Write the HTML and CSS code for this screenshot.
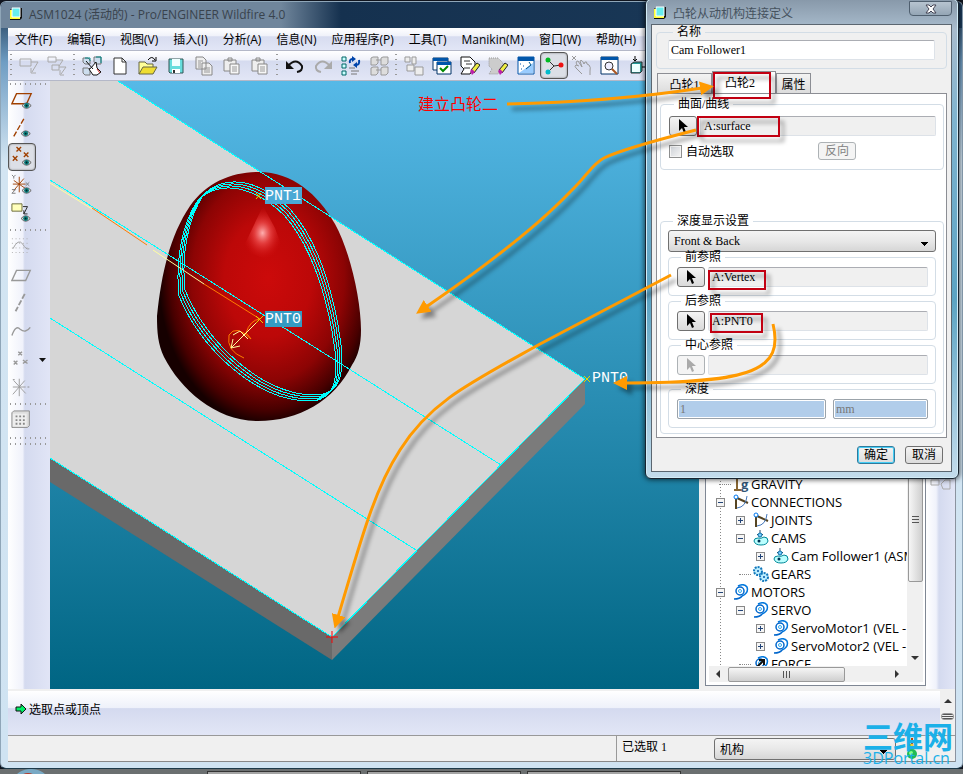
FILE: index.html
```html
<!DOCTYPE html>
<html lang="zh-CN">
<head>
  <meta charset="UTF-8">
  <meta name="viewport" content="width=device-width, initial-scale=1.0">
  <title>ASM1024 (活动的) - Pro/ENGINEER Wildfire 4.0</title>
  <link rel="stylesheet" href="styles.css">
</head>
<body>
  <!-- Shared icons -->
  <svg class="sprite" aria-hidden="true">
    <symbol id="app" viewBox="0 0 14 14"><path d="M1 3l2-2h10v10l-2 2H1z" fill="#111"/><path d="M1 3h10v9H1z" fill="#ff3"/><path d="M3 1h8v9H3z" fill="#6ee"/><path d="M3 1h8v9H3z" fill="none" stroke="#fff"/></symbol>
    <symbol id="eye" viewBox="0 0 12 8"><path d="M1 4q5-6 10 0q-5 6-10 0z" fill="#ddd" stroke="#555"/><circle cx="6" cy="4" r="2.7" fill="#087878"/><circle cx="6" cy="4" r="1" fill="#022"/></symbol>
    <symbol id="cursor" viewBox="0 0 12 16"><path d="M2 1v12l3-3 2 5 2-1-2-5h4z" fill="currentColor"/></symbol>
    <symbol id="joint" viewBox="0 0 16 16"><path d="M3 3v12M4 4l11 5" stroke="#542" stroke-width="2"/><path d="M4 14q9-1 10-12" fill="none" stroke="#47b"/><circle cx="3" cy="3" r="2" fill="#fff" stroke="#07e"/></symbol>
    <symbol id="cam" viewBox="0 0 16 16"><path d="M7 0v7M4 4l3 3 3-3" fill="none" stroke="#246"/><circle cx="7" cy="5" r="2" fill="#7cf" stroke="#17a"/><path d="M1 11q0-3 4-3q3 1 6-1q4 0 4 4q-1 4-7 4t-7-4z" fill="#bff" stroke="#089"/><circle cx="6" cy="11" r="1.500" fill="#035"/></symbol>
    <symbol id="motor" viewBox="0 0 16 16"><path d="M5 2q6-3 9 1q2 6-5 9" fill="none" stroke="#07d" stroke-width="1.500"/><circle cx="7" cy="7" r="4" fill="none" stroke="#06c" stroke-width="1.500"/><circle cx="7" cy="7" r="1.500" fill="none" stroke="#3ae"/><path d="M1 15q6 0 8-3" fill="none" stroke="#06c" stroke-width="1.500"/></symbol>
    <symbol id="clip" viewBox="0 0 20 20"><path d="M2 4h12v11H2zM6 2h4v3H6z" fill="#eee" stroke="#888"/><path d="M8 8h9v10H8z" fill="#f7f7f7" stroke="#888"/><path d="M10 11h5M10 13h5M10 15h5" stroke="#999"/></symbol>
  </svg>

  <div class="app-window">
    <header class="title-bar">
      <svg class="app-icon"><use href="#app"/></svg>
      <span class="title-text">ASM1024 (活动的) - Pro/ENGINEER Wildfire 4.0</span>
    </header>

    <div class="client">
      <nav class="menu-bar">
        <button>文件(F)</button>
        <button>编辑(E)</button>
        <button>视图(V)</button>
        <button>插入(I)</button>
        <button>分析(A)</button>
        <button>信息(N)</button>
        <button>应用程序(P)</button>
        <button>工具(T)</button>
        <button>Manikin(M)</button>
        <button>窗口(W)</button>
        <button>帮助(H)</button>
      </nav>

      <div class="toolbar">
        <i class="handle"></i>
        <button aria-label="选取"><svg viewBox="0 0 20 20"><path d="M1 3h11v7H1zM12 6h7l-6 10M12 12v5h5" fill="none" stroke="#aaa"/></svg></button>
        <button aria-label="选取链"><svg viewBox="0 0 20 20"><path d="M1 1h8v5H1zM5 9h7v5H5zM9 4h7l-4 6M12 11h7l-5 7M13 14v5h4" fill="none" stroke="#aaa"/></svg></button>
        <i class="handle"></i>
        <button aria-label="装配"><svg viewBox="0 0 20 20"><path d="M1 2h5l2 2v4H3L1 6zM12 1h7v7h-5l-2-2zM1 12h5l2 2v5H3l-2-2z" fill="#cde" stroke="#777"/><path d="M3 2h5v3M14 1h5v6" fill="none" stroke="#088"/><path d="M4 5l7 8M9 12l5-6 1 6 4 4-4 3h-4l-4-6z" fill="#fff" stroke="#111"/><path d="M15 13l3 4" stroke="#c22"/></svg></button>
        <button aria-label="新建"><svg viewBox="0 0 20 20"><path d="M4 2h8l4 4v12H4z" fill="#fff" stroke="#333"/><path d="M12 2v4h4" fill="none" stroke="#333"/></svg></button>
        <button aria-label="打开"><svg viewBox="0 0 20 20"><path d="M1 18V6h6l2 2h6v3" fill="#ff9" stroke="#664"/><path d="M1 18l4-7h14l-4 7z" fill="#ed3" stroke="#664"/><path d="M10 4q4-5 7 0M18 1v4h-4" fill="none" stroke="#000"/></svg></button>
        <button aria-label="保存"><svg viewBox="0 0 20 20"><path d="M3 3h14v14H4l-1-1z" fill="#6dd" stroke="#355"/><path d="M6 3h8v7H6z" fill="#eff"/><path d="M6 13h8v4H6z" fill="#fff"/><path d="M7 14h2v3H7z" fill="#333"/></svg></button>
        <button aria-label="复制"><svg viewBox="0 0 20 20"><path d="M2 1h7l3 3v9H2zM8 7h7l3 3v9H8z" fill="#eee" stroke="#888"/><path d="M4 5h5M4 7h3M4 9h3M4 11h3M10 12h6M10 14h6M10 16h6" stroke="#999"/></svg></button>
        <button aria-label="粘贴"><svg><use href="#clip"/></svg></button>
        <button aria-label="选择性粘贴"><svg><use href="#clip"/></svg></button>
        <i class="handle"></i>
        <button aria-label="撤消"><svg viewBox="0 0 20 20"><path d="M3 10q8-9 14 0q1 5-5 6" fill="none" stroke="#111" stroke-width="2"/><path d="M1 5v8h8z" fill="#111"/></svg></button>
        <button aria-label="重做"><svg viewBox="0 0 20 20"><path d="M17 10q-8-9-14 0q-1 5 5 6" fill="none" stroke="#aaa" stroke-width="2"/><path d="M19 5v8h-8z" fill="#aaa"/></svg></button>
        <button aria-label="再生"><svg viewBox="0 0 20 20"><path d="M1 1h4v4H1zM1 8h4v4H1zM1 15h4v4H1z" fill="#cff" stroke="#066"/><path d="M10 15h8M10 18h6M8 12h6" stroke="#777"/><path d="M9 7q-1-4 3-4M18 4q1 5-3 5" fill="none" stroke="#04a" stroke-width="2"/><path d="M11 0l4 3-4 3zM16 6l-4 3 4 3z" fill="#04a"/></svg></button>
        <button aria-label="查找"><svg viewBox="0 0 20 20"><path d="M2 2l2-1h5v6l-2 2H2zM12 2l2-1h5v6l-2 2h-5zM2 12l2-1h5v6l-2 2H2zM12 12l2-1h5v6l-2 2h-5zM7 4h5M7 14h5" fill="#ddd" stroke="#999"/></svg></button>
        <i class="handle"></i>
        <button aria-label="图层"><svg viewBox="0 0 20 20"><path d="M1 1h5v5H1zM8 1h4v7H8zM3 9h7v6H3zM11 11h8v8h-8z" fill="#eee" stroke="#999"/></svg></button>
        <button aria-label="视图管理器"><svg viewBox="0 0 20 20"><path d="M1 2h15v12H1z" fill="#fff" stroke="#036"/><path d="M1 2h15v3H1z" fill="#05a"/><path d="M5 6h14v12H5z" fill="#fff" stroke="#036"/><path d="M5 6h14v3H5z" fill="#05a"/><path d="M8 12l3 3 5-5" fill="none" stroke="#080" stroke-width="2"/></svg></button>
        <button aria-label="重画"><svg viewBox="0 0 20 20"><path d="M1 1h9l5 5v4l-5 8H1l3-5-3-3z" fill="#fff" stroke="#111"/><path d="M4 5h6M6 8h6M4 12h6" stroke="#333"/><path d="M11 14l6-7 3 2-6 8z" fill="#ee4" stroke="#222"/><path d="M10 15l2-2 3 3-3 3z" fill="#b2a"/></svg></button>
        <button aria-label="隐藏"><svg viewBox="0 0 20 20"><path d="M1 2h9l5 5v3l-5 8H1l3-5-3-3z" fill="#ccc" stroke="#999" stroke-dasharray="1 1"/><path d="M11 14l6-7 3 2-6 8z" fill="#ee4" stroke="#222"/><path d="M10 15l2-2 3 3-3 3z" fill="#b2a"/></svg></button>
        <button aria-label="定向"><svg viewBox="0 0 20 20"><path d="M2 1h16v17H2z" fill="#fff" stroke="#05a"/><path d="M2 1h16v4H2z" fill="#05a"/><path d="M3 17L17 7v10z" fill="#9cf"/><path d="M13 6l2 3-5 4" fill="none" stroke="#058"/><path d="M4 8h1M7 10h1M5 13h1" stroke="#05a"/></svg></button>
        <button class="pressed" aria-label="旋转中心"><svg viewBox="0 0 20 20"><path d="M4 4l6 6 7-1M10 10l-6 6" fill="none" stroke="#333"/><circle cx="4" cy="4" r="2.500" fill="#0b2"/><circle cx="17" cy="9" r="2.500" fill="#e11"/><circle cx="4" cy="16" r="2.500" fill="#0bc"/></svg></button>
        <button aria-label="拖动"><svg viewBox="0 0 20 20"><path d="M0 0l4 4M4 0L0 4M5 9q-2-4 1-4l4 6-2-6q2-2 4 3l1-2q2-1 2 2l2 1q2 2 1 6v4M7 10l-3-1q-2 1 0 3l6 6" fill="none" stroke="#999"/></svg></button>
        <button aria-label="缩放"><svg viewBox="0 0 20 20"><path d="M1 1h17v17H1z" fill="#fff" stroke="#036"/><path d="M1 1h17v3H1z" fill="#05a"/><circle cx="9" cy="10" r="4" fill="#eef" stroke="#333"/><path d="M12 13l5 5" stroke="#a52" stroke-width="2"/></svg></button>
        <button aria-label="元件"><svg viewBox="0 0 20 20"><path d="M3 8l3-2h8v9l-2 2H3z" fill="#299" stroke="#333"/><path d="M4 8h8v8H4z" fill="#eff"/><path d="M7 0v5M5 3l2 2 2-2M19 11h-5" stroke="#000" fill="none"/></svg></button>
      </div>

      <main class="workspace">
        <aside class="side-tools">
          <i class="handle-row"></i>
          <button aria-label="平面显示"><svg viewBox="0 0 24 24"><path d="M6 4h16l-5 11H1z" fill="none" stroke="#a04000" stroke-width="1.500"/><use href="#eye" x="11" y="13" width="12" height="8"/></svg></button>
          <button aria-label="轴显示"><svg viewBox="0 0 24 24"><path d="M14 1L3 20" fill="none" stroke="#a04000" stroke-width="1.500" stroke-dasharray="6 2"/><use href="#eye" x="10" y="13" width="12" height="8"/></svg></button>
          <button class="pressed" aria-label="点显示"><svg viewBox="0 0 24 24"><path d="M6 1l5 5M11 1L6 6M14 7l5 5M19 7l-5 5M2 11l5 5M7 11l-5 5" stroke="#a04000" stroke-width="1.500"/><use href="#eye" x="11" y="14" width="12" height="8"/></svg></button>
          <button aria-label="坐标系显示"><svg viewBox="0 0 24 24"><path d="M9 3v17M3 7l13 9M14 5L3 18M2 11h14" stroke="#a04000"/><path d="M1 1l2 2 2-2M3 3v2M1 17h4l-4 4h4M16 9l4 4M20 9l-4 4" fill="none" stroke="#777"/><use href="#eye" x="11" y="14" width="12" height="8"/></svg></button>
          <button aria-label="注释显示"><svg viewBox="0 0 24 24"><path d="M1 2h11v8H1z" fill="#ffb" stroke="#663"/><path d="M13 5h5l-4 8v-4M14 13h4" fill="none" stroke="#222"/><use href="#eye" x="10" y="14" width="12" height="8"/></svg></button>
          <i class="handle-row"></i>
          <button aria-label="草绘"><svg viewBox="0 0 24 24"><path d="M1 3h20M1 8h20M1 13h20M1 18h20" stroke="#aaa" stroke-dasharray="1 3"/><path d="M2 14q6-12 11-5q3 6 7 5" fill="none" stroke="#999"/></svg></button>
          <button aria-label="平面"><svg viewBox="0 0 24 24"><path d="M6 7h15l-5 11H1z" fill="none" stroke="#999" stroke-width="1.500"/></svg></button>
          <button aria-label="轴"><svg viewBox="0 0 24 24"><path d="M15 2L5 21" stroke="#999" stroke-width="2" stroke-dasharray="6 2"/></svg></button>
          <button aria-label="曲线"><svg viewBox="0 0 24 24"><path d="M1 17q4-12 9-7q6 5 11-2" fill="none" stroke="#999" stroke-width="1.500"/></svg></button>
          <button aria-label="点"><svg viewBox="0 0 24 24"><path d="M8 4l4 4M12 4L8 8M13 13l5 4M18 13l-5 4M3 14l4 4M7 14l-4 4" stroke="#999" stroke-width="1.500"/></svg></button>
          <button aria-label="坐标系"><svg viewBox="0 0 24 24"><path d="M9 3v19M2 12h14M3 5l13 14M15 5L2 20" stroke="#999"/><path d="M2 4h2M18 12h2" stroke="#888"/></svg></button>
          <i class="handle-row"></i>
          <button aria-label="阵列"><svg viewBox="0 0 24 24"><path d="M1 3l2-2h17v16l-2 2H1z" fill="#ddd" stroke="#888"/><path d="M2 4h15v14H2z" fill="#eee"/><path d="M5 7h11M5 11h11M5 15h11" stroke="#888" stroke-width="2" stroke-dasharray="2 2"/></svg></button>
          <i class="handle-row"></i>
          <i class="handle-row"></i>
          <svg class="flyout" viewBox="0 0 7 4"><path d="M0 0h7L3.500 4z" fill="#111"/></svg>
        </aside>

        <section class="viewport">
          <svg viewBox="50 81 649 608" preserveAspectRatio="xMinYMin slice">
            <defs>
              <linearGradient id="sky" x1="0" y1="0" x2="0" y2="1"><stop offset="0" stop-color="#56b9e7"/><stop offset="1" stop-color="#006583"/></linearGradient>
              <radialGradient id="egg" gradientUnits="userSpaceOnUse" cx="268" cy="278" r="124" gradientTransform="translate(268 278) scale(.88 1.180) translate(-268 -278)"><stop offset="0" stop-color="#cc0a0a"/><stop offset=".4" stop-color="#bc0808"/><stop offset=".7" stop-color="#8c0404"/><stop offset=".9" stop-color="#480000"/><stop offset="1" stop-color="#160000"/></radialGradient>
              <radialGradient id="shine"><stop offset="0" stop-color="#ffb0b0"/><stop offset=".4" stop-color="#f05050" stop-opacity=".7"/><stop offset="1" stop-color="#d20a0a" stop-opacity="0"/></radialGradient>
            </defs>
            <rect x="50" y="81" width="649" height="609" fill="url(#sky)"/>
            <!-- Base plate -->
            <path d="M50 81h68L585 379 332 637 50 458z" fill="#d6d6d6"/>
            <path d="M50 458L332 637v23L50 482z" fill="#696969"/>
            <path d="M585 379v25L332 660v-23z" fill="#7b7b7b"/>
            <!-- Egg shaped cam -->
            <path d="M259 172C292 172 318 194 335 224C350 251 361 300 361 330C361 345 358 356 352 365C334 401 299 421 258 421C216 421 181 390 164 357C158 344 157 333 157 316C161 277 169 237 190 206C207 182 232 172 259 172z" fill="url(#egg)"/>
            <path d="M263 206L275 228 283 250 268 260 242 250z" fill="url(#shine)"/>
            <g class="edge">
              <path d="M118 81L585 379 332 637 50 458"/>
              <path d="M50 180L501 465M50 318L416 550"/>
              <path id="ring" d="M204 194C228 172 262 182 290 209C322 245 336 305 341 345C344 372 340 386 330 391C325 395 319 395 312 395C262 393 208 345 185 290C182 262 185 222 204 194z"/>
              <use href="#ring" x="-2" y="2"/>
              <use href="#ring" x="-4" y="4"/>
              <use href="#ring" x="-6" y="6"/>
            </g>
            <path d="M50 183L92 209M153 250L204 284" stroke="#ffffa0"/>
            <path d="M92 208l55 37M204 284l56 35M260 319q-10 1-14 14q4 4 5 6M251 339q-15-15-22-4q-3 16 15 23" fill="none" stroke="#ff7d00"/>
            <path d="M260 319L231 348M231 348l2-9M231 348l9-2M233 335l7-4 8 8" fill="none" stroke="#ffffa0"/>
            <path d="M256 316l7 7M263 316l-7 7M256 193l5 6M261 193l-5 6M584 376l6 6M590 376l-6 6" stroke="#dddc00"/>
            <path d="M326 637h12M332 631v12" stroke="#f00"/>
            <rect x="265" y="187" width="37" height="17" fill="#4aa9d5"/>
            <rect x="265" y="311" width="37" height="16" fill="#349bc3"/>
            <text class="point-label" x="265" y="200">PNT1</text>
            <text class="point-label" x="265" y="323">PNT0</text>
            <text class="point-label" x="592" y="382">PNT0</text>
          </svg>
        </section>

        <section class="tree-panel">
          <div class="tree-view">
            <ul class="tree">
              <li class="level-1 leaf"><svg viewBox="0 0 16 16"><path d="M4 2v11M1 14h7" stroke="#863" stroke-width="2"/></svg><b class="g-mark">g</b>GRAVITY</li>
              <li class="level-1"><button class="toggle open" aria-label="折叠"></button><svg><use href="#joint"/></svg>CONNECTIONS</li>
              <li class="level-2"><button class="toggle" aria-label="展开"></button><svg><use href="#joint"/></svg>JOINTS</li>
              <li class="level-2"><button class="toggle open" aria-label="折叠"></button><svg><use href="#cam"/></svg>CAMS</li>
              <li class="level-3"><button class="toggle" aria-label="展开"></button><svg><use href="#cam"/></svg>Cam Follower1 (ASM</li>
              <li class="level-2 leaf"><svg viewBox="0 0 16 16"><circle cx="5" cy="5" r="4" fill="#bef" stroke="#17b" stroke-width="2" stroke-dasharray="2 1"/><circle cx="11" cy="11" r="4" fill="#bef" stroke="#17b" stroke-width="2" stroke-dasharray="2 1"/><circle cx="5" cy="5" r="1" fill="#05a"/><circle cx="11" cy="11" r="1" fill="#05a"/></svg>GEARS</li>
              <li class="level-1"><button class="toggle open" aria-label="折叠"></button><svg><use href="#motor"/></svg>MOTORS</li>
              <li class="level-2"><button class="toggle open" aria-label="折叠"></button><svg><use href="#motor"/></svg>SERVO</li>
              <li class="level-3"><button class="toggle" aria-label="展开"></button><svg><use href="#motor"/></svg>ServoMotor1 (VEL - A</li>
              <li class="level-3"><button class="toggle" aria-label="展开"></button><svg><use href="#motor"/></svg>ServoMotor2 (VEL - A</li>
              <li class="level-2 leaf"><svg viewBox="0 0 16 16"><use href="#motor"/><path d="M3 12l8-8M6 4h5v5" fill="none" stroke="#111" stroke-width="2"/></svg>FORCE</li>
            </ul>
            <div class="v-scroll"><span class="v-thumb"></span><i class="arrow down"></i></div>
          </div>
          <div class="h-scroll"><i class="arrow left"></i><span class="h-thumb"></span><i class="arrow right"></i></div>
        </section>

        <aside class="right-strip">
          <svg viewBox="0 0 22 12"><path d="M1 2h8v5H1zM11 6l4-4h5v9h-7z" fill="none" stroke="#aaa"/></svg>
        </aside>
      </main>

      <div class="message-area">
        <p><svg viewBox="0 0 12 12"><path d="M1 4h5V1l5 5-5 5V8H1z" fill="#0e6" stroke="#111"/></svg>选取点或顶点</p>
        <div class="message-scroll"><i class="arrow up"></i><i class="grip"></i></div>
      </div>

      <footer class="status-bar">
        <span class="selected">已选取 1</span>
        <select aria-label="过滤器"><option>机构</option></select>
        <svg class="light" viewBox="0 0 12 22"><path d="M6 0v10" stroke="#b40" stroke-width="2"/><path d="M3 6h6l-1 6H4z" fill="#ec3"/><circle cx="6" cy="16" r="5" fill="#2b5"/><circle cx="5" cy="15" r="2" fill="#8f8"/></svg>
      </footer>
    </div>
  </div>

  <div class="taskbar">
    <svg viewBox="0 0 32 5"><ellipse cx="16" cy="10" rx="16" ry="10" fill="#79a9c4"/><ellipse cx="13" cy="8" rx="7" ry="4" fill="#b43a2a"/></svg>
    <span></span><span></span><span></span>
  </div>

  <!-- Cam follower definition dialog -->
  <form class="dialog" role="dialog" aria-labelledby="dialogTitle">
    <header class="dialog-title">
      <svg class="app-icon"><use href="#app"/></svg>
      <span id="dialogTitle">凸轮从动机构连接定义</span>
      <button type="button" class="close" aria-label="关闭"><svg viewBox="0 0 12 10"><path d="M1 1h3l2 2 2-2h3L8 5l3 4H8L6 7 4 9H1l3-4z" fill="#fff" stroke="#445"/></svg></button>
    </header>
    <div class="dialog-body">
      <fieldset class="name-group">
        <legend><label for="camName">名称</label></legend>
        <input type="text" id="camName" value="Cam Follower1">
      </fieldset>

      <div class="tabs" role="tablist">
        <button type="button" role="tab">凸轮1</button>
        <button type="button" role="tab" class="active" aria-selected="true">凸轮2</button>
        <button type="button" role="tab">属性</button>
      </div>

      <div class="tab-page">
        <fieldset class="surface-group">
          <legend><label for="surface">曲面/曲线</label></legend>
          <div class="pick-row">
            <button type="button" aria-label="选取曲面"><svg><use href="#cursor"/></svg></button>
            <input type="text" id="surface" value="A:surface" readonly>
          </div>
          <div class="auto-row">
            <input type="checkbox" id="autoPick">
            <label for="autoPick">自动选取</label>
            <button type="button" class="btn" disabled>反向</button>
          </div>
        </fieldset>

        <fieldset class="depth-group">
          <legend><label for="depthMode">深度显示设置</label></legend>
          <select id="depthMode"><option>Front &amp; Back</option></select>
          <fieldset>
            <legend><label for="frontRef">前参照</label></legend>
            <div class="pick-row">
              <button type="button" aria-label="选取前参照"><svg><use href="#cursor"/></svg></button>
              <input type="text" id="frontRef" value="A:Vertex" readonly>
            </div>
          </fieldset>
          <fieldset>
            <legend><label for="backRef">后参照</label></legend>
            <div class="pick-row">
              <button type="button" aria-label="选取后参照"><svg><use href="#cursor"/></svg></button>
              <input type="text" id="backRef" value="A:PNT0" readonly>
            </div>
          </fieldset>
          <fieldset>
            <legend><label for="centerRef">中心参照</label></legend>
            <div class="pick-row">
              <button type="button" aria-label="选取中心参照" disabled><svg><use href="#cursor"/></svg></button>
              <input type="text" id="centerRef" readonly>
            </div>
          </fieldset>
          <fieldset>
            <legend><label for="depth">深度</label></legend>
            <div class="depth-row">
              <input type="text" id="depth" value="1" disabled>
              <input type="text" aria-label="单位" value="mm" disabled>
            </div>
          </fieldset>
        </fieldset>
      </div>

      <div class="dialog-buttons">
        <button type="submit" class="btn default">确定</button>
        <button type="button" class="btn">取消</button>
      </div>
    </div>
  </form>

  <!-- Notes drawn over the screen -->
  <svg class="notes" viewBox="0 0 963 774">
    <defs>
      <marker id="arrow" viewBox="0 0 14 14" refX="2" refY="7" markerWidth="14" markerHeight="14" markerUnits="userSpaceOnUse" orient="auto"><path d="M0 0l14 7-14 7z" fill="#ff9a00"/></marker>
    </defs>
    <g class="note-boxes">
      <rect x="714" y="73" width="56" height="25"/>
      <rect x="698" y="117" width="81" height="19"/>
      <rect x="709" y="271" width="56" height="18"/>
      <rect x="711" y="314" width="51" height="18"/>
    </g>
    <g class="note-arrows">
      <path d="M507 104Q610 102 702 88"/>
      <path d="M696 130Q622 149 604 158C592 164 587 176 570 192Q524 240 426 307"/>
      <path d="M671 275L540 344C470 383 430 402 400 450C374 490 361 540 338 617"/>
      <path d="M773 324C784 370 753 383 625 383"/>
    </g>
    <text class="note-text" x="418" y="110">建立凸轮二</text>
  </svg>
  <div class="watermark"><strong>三维网</strong><span>3DPortal.cn</span></div>
</body>
</html>
```

FILE: styles.css
```css
* {
  box-sizing: border-box;
}
body {
  margin: 0;
  position: relative;
  display: flex;
  flex-direction: column;
  height: 100vh;
  overflow: hidden;
  background: #10151f;
  color: #000;
  font: 12px "Open Sans", "Noto Sans CJK SC", sans-serif;
}
button, input, select {
  font: inherit;
  color: inherit;
  margin: 0;
}
button {
  padding: 0;
  border: none;
  background: none;
}
svg {
  display: block;
  flex: none;
}
.sprite {
  position: absolute;
  width: 0;
  height: 0;
}
.app-icon {
  width: 14px;
  height: 14px;
}

/* Main window */
.app-window {
  flex: 1;
  display: flex;
  flex-direction: column;
  min-height: 0;
  margin-top: 1px;
  padding: 0 6px 6px 7px;
  border: 1px solid #8fa6b8;
  border-bottom-color: #1d3a4a;
  border-radius: 6px;
  background: linear-gradient(#16304c, #6f9dc3 60px, #d3e5f2 160px, #cfe3f2);
}
.title-bar {
  display: flex;
  align-items: center;
  gap: 6px;
  height: 26px;
  margin: 0 -6px 0 -7px;
  padding: 0 0 2px 8px;
  border-radius: 5px 5px 0 0;
  background: linear-gradient(90deg, #70869c, #70869c 280px, #15314f 340px, #1c3c5c);
}
.title-text {
  color: #39434d;
  white-space: nowrap;
}
.client {
  flex: 1;
  display: flex;
  flex-direction: column;
  min-height: 0;
  background: #f0f0f0;
  border-right: 1px solid #8b93a0;
}
.menu-bar {
  display: flex;
  gap: 15px;
  height: 23px;
  padding-left: 7px;
  background: linear-gradient(#fff, #f0f2fa 35%, #d7dcf0 40%, #e2e6f6);
  border-bottom: 1px solid #b4b8c8;
  white-space: nowrap;
}
.toolbar {
  display: flex;
  align-items: center;
  height: 30px;
  background: linear-gradient(#fff, #f0f2fa 30%, #d5dbef 35%, #e2e6f6);
  border-bottom: 1px solid #b4b8c8;
}
.toolbar button {
  width: 28px;
  height: 27px;
  display: grid;
  place-items: center;
}
.toolbar svg {
  width: 20px;
  height: 20px;
}
.handle {
  width: 7px;
  height: 27px;
  background: radial-gradient(#999 1px, transparent 1px) 0 0 / 7px 5px;
}
.toolbar .pressed, .side-tools .pressed {
  border: 1px solid #555;
  border-radius: 4px;
  background: #dcdfe6;
  box-shadow: inset 0 0 2px #777;
}
.workspace {
  flex: 1;
  display: flex;
  min-height: 0;
}

/* Datum tools */
.side-tools {
  position: relative;
  width: 42px;
  background: linear-gradient(90deg, #fff, #f0f2fb 35%, #d4daef 40%, #e1e5f6);
}
.side-tools button {
  display: grid;
  place-items: center;
  width: 28px;
  height: 28px;
}
.side-tools button svg {
  width: 22px;
  height: 22px;
}
.handle-row {
  display: block;
  height: 6px;
  background: radial-gradient(#999 1px, transparent 1px) 0 0 / 5px 6px;
}
.flyout {
  position: absolute;
  top: 277px;
  right: 4px;
  width: 7px;
  height: 4px;
}
.viewport {
  flex: 1;
  position: relative;
  min-width: 0;
  background: #006583;
}
.viewport svg {
  position: absolute;
  width: 100%;
  height: 100%;
}
.edge {
  fill: none;
  stroke: #0ff;
  shape-rendering: crispEdges;
}
.point-label {
  fill: #fff;
  font: 15px "Liberation Mono", monospace;
}

/* Model tree */
.tree-panel {
  display: flex;
  flex-direction: column;
  width: 221px;
  margin: 0 0 3px 6px;
  padding: 0 2px 3px 3px;
  border: 1px solid #7f8794;
  background: #fff;
}
.tree-view {
  flex: 1;
  display: flex;
  min-height: 0;
  overflow: hidden;
}
.tree {
  flex: 1;
  align-self: flex-start;
  min-width: 0;
  margin: 0;
  padding: 393px 0 0;
  list-style: none;
  overflow: hidden;
  font: 13px/18px "Open Sans", "Noto Sans CJK SC", sans-serif;
}
.tree li {
  display: flex;
  align-items: center;
  gap: 2px;
  height: 18px;
  white-space: nowrap;
  background: repeating-linear-gradient(#888 0 1px, transparent 1px 3px) 11px 0 / 1px 18px no-repeat;
}
.tree svg {
  width: 16px;
  height: 16px;
}
.tree .level-1 {
  padding-left: 7px;
}
.tree .level-2 {
  padding-left: 27px;
}
.tree .level-3 {
  padding-left: 47px;
}
.tree .leaf::before {
  content: "";
  width: 12px;
  margin-left: 3px;
  border-top: 1px dotted #888;
}
.g-mark {
  color: #357;
  width: 8px;
  margin: 0 0 0 -10px;
}
.toggle {
  flex: none;
  width: 9px;
  height: 9px;
  margin-right: 6px;
  border: 1px solid #888;
  background:
    linear-gradient(#247, #247) 1px 3px / 5px 1px no-repeat,
    linear-gradient(#247, #247) 3px 1px / 1px 5px no-repeat, #f5f5f5;
}
.toggle.open {
  background: linear-gradient(#247, #247) 1px 3px / 5px 1px no-repeat, #f5f5f5;
}
.v-scroll {
  display: flex;
  flex-direction: column;
  align-items: center;
  justify-content: space-between;
  width: 16px;
  padding-bottom: 6px;
  background: #f0f0f0;
}
.v-thumb {
  width: 15px;
  height: 500px;
  border: 1px solid #999;
  border-radius: 2px;
  background:
    repeating-linear-gradient(#555 0 1px, transparent 1px 3px) center 433px / 7px 8px no-repeat,
    linear-gradient(90deg, #f6f6f6, #cfcfcf);
}
.h-scroll {
  display: flex;
  flex: none;
  align-items: center;
  height: 16px;
  padding: 0 8px 0 7px;
  background: #f0f0f0;
}
.h-thumb {
  width: 117px;
  height: 15px;
  margin: 0 auto 0 8px;
  border: 1px solid #999;
  border-radius: 2px;
  background:
    repeating-linear-gradient(90deg, #555 0 1px, transparent 1px 3px) center / 8px 7px no-repeat,
    linear-gradient(#f6f6f6, #cfcfcf);
}
.h-scroll .right {
  margin-right: 16px;
}
.arrow {
  border: 4px solid transparent;
}
.arrow.down {
  border-width: 4px 4px 0;
  border-top-color: #333;
}
.arrow.up {
  border-width: 0 4px 4px;
  border-bottom-color: #333;
}
.arrow.left {
  border-width: 4px 4px 4px 0;
  border-right-color: #333;
}
.arrow.right {
  border-width: 4px 0 4px 4px;
  border-left-color: #333;
}
.right-strip {
  width: 29px;
  padding: 397px 0 0 4px;
  background: linear-gradient(90deg, #fff, #f0f2fb 35%, #d4daef 45%, #e1e5f6);
}
.right-strip svg {
  width: 22px;
  height: 12px;
}

/* Message and status lines */
.message-area {
  display: flex;
  height: 47px;
  border-top: 2px solid #f0f0f0;
  border-bottom: 1px solid #999;
  background: linear-gradient(#fff, #eef1fa 38%, #d4daef 40%, #e2e6f6);
}
.message-area p {
  flex: 1;
  display: flex;
  align-items: center;
  gap: 2px;
  margin: 0 0 8px 7px;
}
.message-area p svg {
  width: 12px;
  height: 12px;
}
.message-scroll {
  display: flex;
  flex-direction: column;
  align-items: center;
  gap: 10px;
  width: 15px;
  padding-top: 8px;
  background: #f0f0f0;
}
.grip {
  width: 13px;
  height: 7px;
  border: 1px solid #999;
  border-radius: 3px;
  background: repeating-linear-gradient(#555 0 1px, #eee 1px 2px);
}
.status-bar {
  display: flex;
  justify-content: flex-end;
  height: 26px;
  padding: 2px 37px 2px 0;
  border-bottom: 1px solid #888;
}
.selected {
  width: 98px;
  margin: -2px 0;
  padding-left: 5px;
  border-left: 1px solid #999;
  font-family: "Liberation Serif", "Noto Sans CJK SC", serif;
  line-height: 22px;
}
.status-bar select {
  width: 182px;
}
.light {
  width: 12px;
  height: 22px;
  margin-left: 10px;
}
select {
  display: block;
  height: 22px;
  padding: 0 24px 0 5px;
  border: 1px solid #707070;
  border-radius: 3px;
  appearance: none;
  background:
    linear-gradient(45deg, transparent 50%, #000 50%) right 11px top 11px / 4px 4px no-repeat,
    linear-gradient(-45deg, transparent 50%, #000 50%) right 7px top 11px / 4px 4px no-repeat,
    linear-gradient(#f4f4f4, #e8e8e8 50%, #d6d6d6);
}
.taskbar {
  display: flex;
  gap: 6px;
  height: 5px;
  padding-left: 15px;
  background: #6b6f70;
}
.taskbar svg {
  width: 32px;
  height: 5px;
  margin-right: 154px;
}
.taskbar span {
  width: 154px;
  margin-top: 2px;
  border: 1px solid #333;
  border-bottom: none;
  background: #a4a4a4;
}

/* Dialog */
.dialog {
  position: absolute;
  top: -2px;
  right: 4px;
  width: 314px;
  padding: 0 6px 6px 5px;
  border: 1px solid #182430;
  border-radius: 6px;
  background: linear-gradient(#8798a9, #a9bccd 30px, #7fb4d0 120px, #5ba3c3 300px, #c4dcec);
  box-shadow: inset 0 0 0 1px #d2ecf7, 0 0 5px 1px rgba(0, 0, 0, .6);
  font-family: "Liberation Serif", "Noto Sans CJK SC", serif;
}
.dialog-title {
  display: flex;
  align-items: center;
  gap: 6px;
  height: 25px;
  padding: 3px 0 0 2px;
  color: #46525e;
}
.close {
  align-self: flex-start;
  display: grid;
  place-items: center;
  width: 43px;
  height: 15px;
  margin: -1px 0 0 auto;
  border: 1px solid #4f5f6f;
  border-radius: 0 0 4px 4px;
  background: linear-gradient(#b7c4d0, #94a5b5);
}
.close svg {
  width: 12px;
  height: 10px;
}
.dialog-body {
  padding: 0 4px 7px;
  border: 1px solid #5b6670;
  background: #f0f0f0;
}
fieldset {
  min-width: 0;
  margin: 0;
  padding: 3px 7px 8px;
  border: 1px solid #d3dde6;
  border-radius: 4px;
}
legend {
  margin-left: 5px;
  padding: 0 4px;
  line-height: 14px;
}
.dialog input[type="text"] {
  display: block;
  flex: 1;
  width: 100%;
  min-width: 0;
  height: 20px;
  padding: 0 2px;
  border: 1px solid #dde2e8;
  border-top-color: #abadb3;
  border-radius: 2px;
  background: #fff;
}
.dialog input[readonly] {
  background: #f0f0f0;
  padding-left: 3px;
}
.name-group {
  padding: 1px 11px 8px;
}
.tabs {
  display: flex;
  align-items: flex-end;
  height: 22px;
  margin: 2px 0 0 1px;
}
.tabs button {
  width: 35px;
  height: 20px;
  border: 1px solid #8c8e94;
  border-bottom: none;
  background: linear-gradient(#f3f3f3, #dcdcdc);
}
.tabs button:first-child {
  width: 55px;
}
.tabs .active {
  width: 64px;
  height: 22px;
  padding: 0 8px 2px 0;
  background: #fff;
}
.tab-page {
  height: 345px;
  display: flex;
  flex-direction: column;
  justify-content: space-between;
  padding: 3px 2px 3px 3px;
  border: 1px solid #8c8e94;
  background: #fff;
}
.pick-row {
  display: flex;
  gap: 3px;
}
.pick-row button {
  display: grid;
  place-items: center;
  width: 28px;
  height: 20px;
  border: 1px solid #707070;
  border-radius: 3px;
  background: linear-gradient(#f4f4f4, #dadada);
}
.pick-row button:disabled {
  border-color: #adb2b5;
  background: #f4f4f4;
  color: #aaa;
}
.pick-row svg {
  width: 12px;
  height: 16px;
}
.surface-group {
  padding: 5px 7px 9px 8px;
}
.auto-row {
  display: flex;
  align-items: center;
  gap: 4px;
  margin-top: 6px;
}
.auto-row input {
  width: 13px;
  height: 13px;
  border: 1px solid #8e8f8f;
  appearance: none;
  background: linear-gradient(135deg, #cbcfd5, #f6f6f6);
  box-shadow: inset 0 0 0 1px #f4f4f4;
}
.auto-row .btn {
  margin: 0 80px 0 auto;
}
.depth-group {
  padding: 2px 7px 5px;
}
.depth-group select {
  width: 100%;
}
.depth-group fieldset {
  margin-top: -2px;
}
.depth-group fieldset > div {
  margin-left: 1px;
}
.depth-row {
  display: grid;
  grid-template-columns: 149px 1fr;
  gap: 7px;
}
.dialog input:disabled {
  border: 1px solid #9ba3aa;
  background: #b1cdea;
  box-shadow: inset 0 0 0 1px #fff;
  color: #777;
}
.btn {
  width: 38px;
  height: 18px;
  border: 1px solid #707070;
  border-radius: 3px;
  background: linear-gradient(#f4f4f4, #dcdcdc);
  line-height: 14px;
}
.btn:disabled {
  border-color: #adb2b5;
  background: #f4f4f4;
  color: #838383;
}
.btn.default {
  border-color: #2f7a9c;
  box-shadow: inset 0 0 0 1px #45cdf5;
}
.dialog-buttons {
  display: flex;
  justify-content: flex-end;
  gap: 10px;
  padding: 8px 4px 0 0;
}

/* Notes */
.notes {
  position: absolute;
  inset: 0;
  width: 100%;
  height: 100%;
  pointer-events: none;
}
.note-boxes {
  fill: none;
  stroke: #c20012;
  stroke-width: 2;
  filter: drop-shadow(4px 5px 2px rgba(0, 0, 0, .4));
}
.note-arrows path {
  fill: none;
  stroke: #ff9a00;
  stroke-width: 3;
  marker-end: url(#arrow);
}
.note-arrows {
  filter: drop-shadow(5px 5px 2px rgba(0, 0, 0, .4));
}
.note-text {
  fill: #f00;
  font: 16px "Noto Sans CJK SC", sans-serif;
}
.watermark {
  position: absolute;
  right: 8px;
  bottom: 8px;
  width: 92px;
  color: #1bb0e8;
  pointer-events: none;
}
.watermark strong, .watermark span {
  display: block;
  white-space: nowrap;
}
.watermark strong {
  font: bold 30px/30px "Noto Sans CJK SC", sans-serif;
}
.watermark span {
  font: 16px/16px "Open Sans", sans-serif;
}
```
